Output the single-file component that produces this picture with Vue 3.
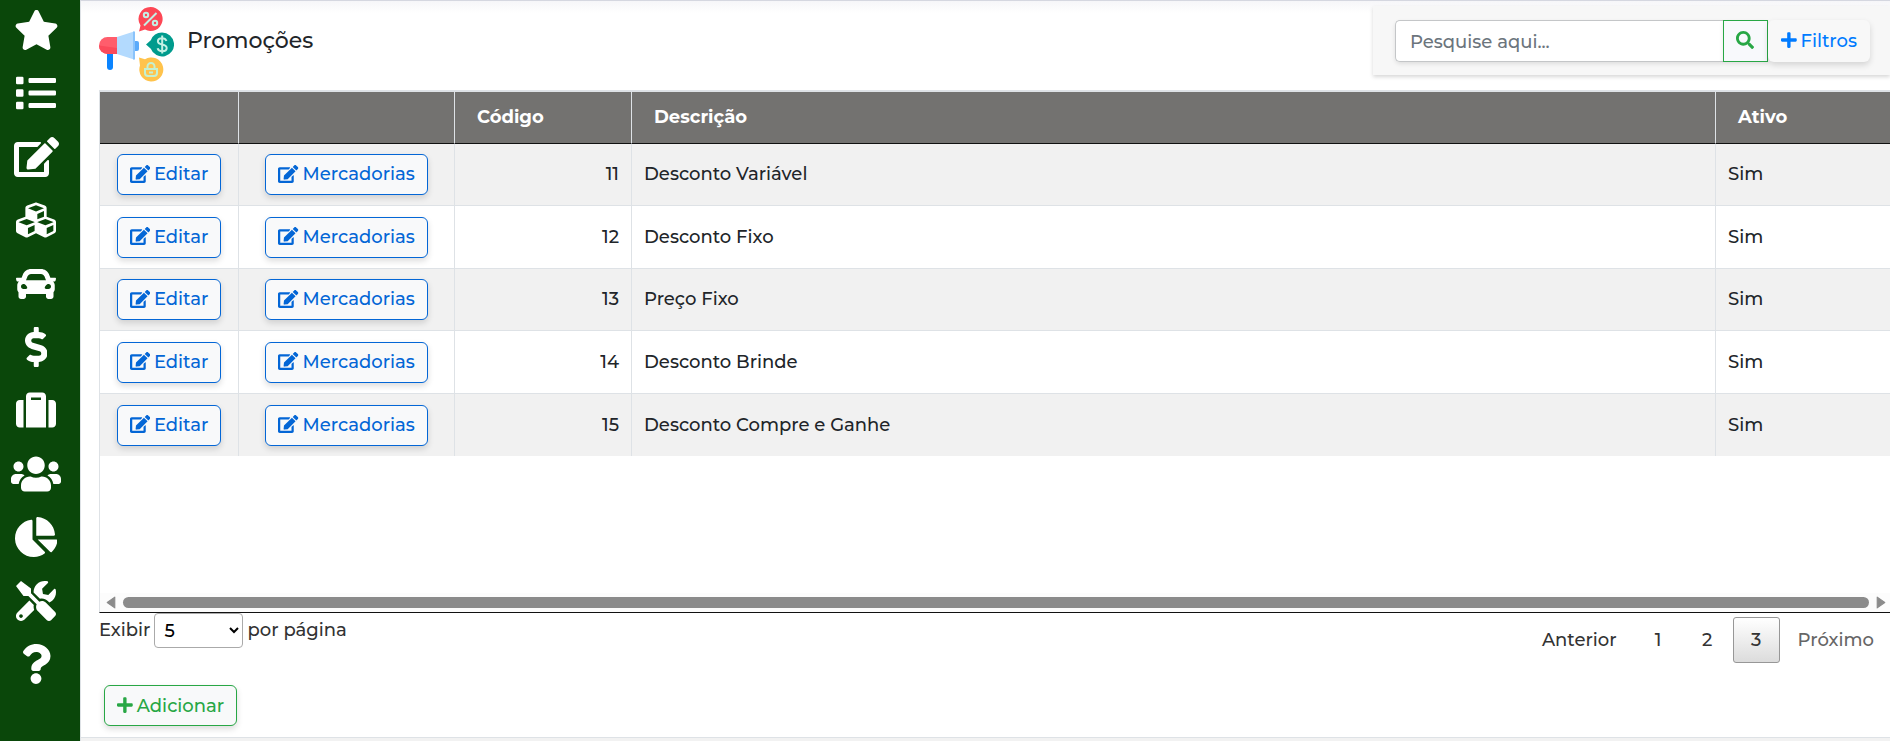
<script setup>
import { ref } from 'vue'

const icons = {
  star: { w: 576, d: 'M259.3 17.8L194 150.2 47.9 171.5c-26.2 3.8-36.7 36.1-17.7 54.6l105.7 103-25 145.5c-4.5 26.3 23.2 46 46.4 33.7L288 439.6l130.7 68.7c23.2 12.2 50.9-7.4 46.4-33.7l-25-145.5 105.7-103c19-18.5 8.5-50.8-17.7-54.6L382 150.2 316.7 17.8c-11.7-23.6-45.6-23.9-57.4 0z' },
  list: { w: 512, d: 'M80 368H16a16 16 0 0 0-16 16v64a16 16 0 0 0 16 16h64a16 16 0 0 0 16-16v-64a16 16 0 0 0-16-16zm0-320H16A16 16 0 0 0 0 64v64a16 16 0 0 0 16 16h64a16 16 0 0 0 16-16V64a16 16 0 0 0-16-16zm0 160H16a16 16 0 0 0-16 16v64a16 16 0 0 0 16 16h64a16 16 0 0 0 16-16v-64a16 16 0 0 0-16-16zm416 176H176a16 16 0 0 0-16 16v32a16 16 0 0 0 16 16h320a16 16 0 0 0 16-16v-32a16 16 0 0 0-16-16zm0-320H176a16 16 0 0 0-16 16v32a16 16 0 0 0 16 16h320a16 16 0 0 0 16-16V80a16 16 0 0 0-16-16zm0 160H176a16 16 0 0 0-16 16v32a16 16 0 0 0 16 16h320a16 16 0 0 0 16-16v-32a16 16 0 0 0-16-16z' },
  edit: { w: 576, d: 'M402.6 83.2l90.2 90.2c3.8 3.8 3.8 10 0 13.8L274.4 405.6l-92.8 10.3c-12.4 1.4-22.9-9.1-21.5-21.5l10.3-92.8L388.8 83.2c3.8-3.8 10-3.8 13.8 0zm162-22.9l-48.8-48.8c-15.2-15.2-39.9-15.2-55.2 0l-35.4 35.4c-3.8 3.8-3.8 10 0 13.8l90.2 90.2c3.8 3.8 10 3.8 13.8 0l35.4-35.4c15.2-15.3 15.2-40 0-55.2zM384 346.2V448H64V128h229.8c3.2 0 6.2-1.3 8.5-3.5l40-40c7.6-7.6 2.2-20.5-8.5-20.5H48C21.5 64 0 85.5 0 112v352c0 26.5 21.5 48 48 48h352c26.5 0 48-21.5 48-48V306.2c0-10.7-12.9-16-20.5-8.5l-40 40c-2.2 2.3-3.5 5.3-3.5 8.5z' },
  cubes: { w: 512, d: 'M488.6 250.2L392 214V105.5c0-15-9.3-28.4-23.4-33.7l-100-37.5c-8.1-3.1-17.1-3.1-25.3 0l-100 37.5c-14.1 5.3-23.4 18.7-23.4 33.7V214l-96.6 36.2C9.3 255.5 0 268.9 0 283.9V394c0 13.6 7.7 26.1 19.9 32.2l100 50c10.1 5.1 22.1 5.1 32.2 0l103.9-52 103.9 52c10.1 5.1 22.1 5.1 32.2 0l100-50c12.2-6.1 19.9-18.6 19.9-32.2V283.9c0-15-9.3-28.4-23.4-33.7zM358 214.8l-85 31.9v-68.2l85-37v73.3zM154 104.1l102-38.2 102 38.2v.6l-102 41.4-102-41.4v-.6zm84 291.1l-85 42.5v-79.1l85-38.8v75.4zm0-112l-102 41.4-102-41.4v-.6l102-38.2 102 38.2v.6zm240 112l-85 42.5v-79.1l85-38.8v75.4zm0-112l-102 41.4-102-41.4v-.6l102-38.2 102 38.2v.6z' },
  car: { w: 512, d: 'M499.99 176h-59.87l-16.64-41.6C406.38 91.63 365.57 64 319.5 64h-127c-46.06 0-86.88 27.63-103.99 70.4L71.87 176H12.01C4.2 176-1.53 183.34.37 190.91l6 24C7.7 220.25 12.5 224 18.01 224h20.07C24.65 235.73 16 252.78 16 272v48c0 16.12 6.16 30.67 16 41.93V416c0 17.67 14.33 32 32 32h32c17.67 0 32-14.33 32-32v-32h256v32c0 17.67 14.33 32 32 32h32c17.67 0 32-14.33 32-32v-54.07c9.84-11.25 16-25.8 16-41.93v-48c0-19.22-8.65-36.27-22.07-48H494c5.51 0 10.31-3.75 11.64-9.09l6-24c1.89-7.57-3.84-14.91-11.65-14.91zm-352.06-17.83c7.29-18.22 24.94-30.17 44.57-30.17h127c19.63 0 37.28 11.95 44.57 30.17L384 208H128l19.93-49.83zM96 319.8c-19.2 0-32-12.76-32-31.9S76.8 256 96 256s48 28.71 48 47.85-28.8 15.95-48 15.95zm320 0c-19.2 0-48 3.19-48-15.95S396.8 256 416 256s32 12.76 32 31.9-12.8 31.9-32 31.9z' },
  dollar: { w: 288, d: 'M209.2 233.4l-108-31.6C88.7 198.2 80 186.5 80 173.5c0-16.3 13.2-29.5 29.5-29.5h66.3c12.2 0 24.2 3.7 34.2 10.5 6.1 4.1 14.3 3.1 19.5-2l34.8-34c7.1-6.9 6.1-18.4-1.8-24.5C238 74.8 207.4 64.1 176 64V16c0-8.8-7.2-16-16-16h-32c-8.8 0-16 7.2-16 16v48h-2.5C45.8 64-5.4 118.7.5 183.6c4.2 46.1 39.4 83.6 83.8 96.6l102.5 30c12.5 3.7 21.2 15.3 21.2 28.3 0 16.3-13.2 29.5-29.5 29.5h-66.3C100 368 88 364.3 78 357.5c-6.1-4.1-14.3-3.1-19.5 2l-34.8 34c-7.1 6.9-6.1 18.4 1.8 24.5 24.5 19.2 55.1 29.9 86.5 30v48c0 8.8 7.2 16 16 16h32c8.8 0 16-7.2 16-16v-48.2c46.6-.9 90.3-28.6 105.7-72.7 21.5-61.6-14.6-124.8-72.5-141.7z' },
  suitcase: { w: 512, d: 'M128 480h256V80c0-26.5-21.5-48-48-48H176c-26.5 0-48 21.5-48 48v400zm64-384h128v32H192V96zm320 80v256c0 26.5-21.5 48-48 48h-48V128h48c26.5 0 48 21.5 48 48zM96 480H48c-26.5 0-48-21.5-48-48V176c0-26.5 21.5-48 48-48h48v352z' },
  users: { w: 640, d: 'M96 224c35.3 0 64-28.7 64-64s-28.7-64-64-64-64 28.7-64 64 28.7 64 64 64zm448 0c35.3 0 64-28.7 64-64s-28.7-64-64-64-64 28.7-64 64 28.7 64 64 64zm32 32h-64c-17.6 0-33.5 7.1-45.1 18.6 40.3 22.1 68.9 62 75.1 109.4h66c17.7 0 32-14.3 32-32v-32c0-35.3-28.7-64-64-64zm-256 0c61.9 0 112-50.1 112-112S381.9 32 320 32 208 82.1 208 144s50.1 112 112 112zm76.8 32h-8.3c-20.8 10-43.9 16-68.5 16s-47.6-6-68.5-16h-8.3C179.6 288 128 339.6 128 403.2V432c0 26.5 21.5 48 48 48h288c26.5 0 48-21.5 48-48v-28.8c0-63.6-51.6-115.2-115.2-115.2zm-223.7-13.4C161.5 263.1 145.6 256 128 256H64c-35.3 0-64 28.7-64 64v32c0 17.7 14.3 32 32 32h65.9c6.3-47.4 34.9-87.3 75.2-109.4z' },
  chart: { w: 544, d: 'M527.79 288H290.5l158.03 158.03c6.04 6.04 15.98 6.53 22.19.68 38.7-36.46 65.32-85.61 73.13-140.86 1.34-9.46-6.51-17.85-16.06-17.85zm-15.83-64.8C503.72 103.74 408.26 8.28 288.8.04 279.68-.59 272 7.1 272 16.24V240h223.77c9.14 0 16.82-7.68 16.19-16.8zM224 288V50.71c0-9.55-8.39-17.4-17.84-16.06C86.99 51.49-4.1 155.6.14 280.37 4.5 408.51 114.83 513.59 243.03 511.98c50.4-.63 96.97-16.87 135.26-44.03 7.9-5.6 8.42-17.23 1.57-24.08L224 288z' },
  tools: { w: 512, d: 'M501.1 395.7L384 278.6c-23.1-23.1-57.6-27.6-85.4-13.9L192 158.1V96L64 0 0 64l96 128h62.1l106.6 106.6c-13.6 27.8-9.2 62.3 13.9 85.4l117.1 117.1c14.6 14.6 38.2 14.6 52.7 0l52.7-52.7c14.5-14.6 14.5-38.2 0-52.7zM331.7 225c28.3 0 54.9 11 74.9 31l19.4 19.4c15.8-6.9 30.8-16.5 43.8-29.5 37.1-37.1 49.7-89.3 37.9-136.7-2.2-9-13.5-12.1-20.1-5.5l-74.4 74.4-67.9-11.3L334 98.9l74.4-74.4c6.6-6.6 3.4-17.9-5.7-20.2-47.4-11.7-99.6.9-136.6 37.9-28.5 28.5-41.9 66.1-41.2 103.6l82.1 82.1c8.1-1.9 16.5-2.9 24.7-2.9zm-103.9 82l-56.7-56.7L18.7 402.8c-25 25-25 65.5 0 90.5s65.5 25 90.5 0l123.6-123.6c-7.6-19.9-9.9-41.6-5-62.7zM64 472c-13.2 0-24-10.8-24-24 0-13.3 10.7-24 24-24s24 10.7 24 24c0 13.2-10.7 24-24 24z' },
  question: { w: 384, d: 'M202.021 0C122.202 0 70.503 32.703 29.914 91.026c-7.363 10.58-5.093 25.086 5.178 32.874l43.138 32.709c10.373 7.865 25.132 6.026 33.253-4.148 25.049-31.381 43.63-49.449 82.757-49.449 30.764 0 68.816 19.799 68.816 49.631 0 22.552-18.617 34.134-48.993 51.164-35.423 19.86-82.299 44.576-82.299 106.405V320c0 13.255 10.745 24 24 24h72.471c13.255 0 24-10.745 24-24v-5.773c0-42.86 125.268-44.645 125.268-160.627C377.504 66.256 286.902 0 202.021 0zM192 373.459c-38.196 0-69.271 31.075-69.271 69.271 0 38.195 31.075 69.27 69.271 69.27s69.271-31.075 69.271-69.271-31.075-69.27-69.271-69.27z' },
  search: { w: 512, d: 'M505 442.7L405.3 343c-4.5-4.5-10.6-7-17-7H372c27.6-35.3 44-79.7 44-128C416 93.1 322.9 0 208 0S0 93.1 0 208s93.1 208 208 208c48.3 0 92.7-16.4 128-44v16.3c0 6.4 2.5 12.5 7 17l99.7 99.7c9.4 9.4 24.6 9.4 33.9 0l28.3-28.3c9.4-9.4 9.4-24.6.1-34zM208 336c-70.7 0-128-57.2-128-128 0-70.7 57.2-128 128-128 70.7 0 128 57.2 128 128 0 70.7-57.2 128-128 128z' },
  plus: { w: 448, d: 'M416 208H272V64c0-17.67-14.33-32-32-32h-32c-17.67 0-32 14.33-32 32v144H32c-17.67 0-32 14.33-32 32v32c0 17.67 14.33 32 32 32h144v144c0 17.67 14.33 32 32 32h32c17.67 0 32-14.33 32-32V304h144c17.67 0 32-14.33 32-32v-32c0-17.67-14.33-32-32-32z' },
}
const box = (name) => `0 0 ${icons[name].w} 512`

const menu = [
  { icon: 'star', label: 'Favoritos' },
  { icon: 'list', label: 'Listas' },
  { icon: 'edit', label: 'Cadastros' },
  { icon: 'cubes', label: 'Estoque' },
  { icon: 'car', label: 'Veículos' },
  { icon: 'dollar', label: 'Financeiro' },
  { icon: 'suitcase', label: 'Negócios' },
  { icon: 'users', label: 'Pessoas' },
  { icon: 'chart', label: 'Relatórios' },
  { icon: 'tools', label: 'Ferramentas' },
  { icon: 'question', label: 'Ajuda' },
]

const rows = [
  { code: 11, name: 'Desconto Variável', active: 'Sim' },
  { code: 12, name: 'Desconto Fixo', active: 'Sim' },
  { code: 13, name: 'Preço Fixo', active: 'Sim' },
  { code: 14, name: 'Desconto Brinde', active: 'Sim' },
  { code: 15, name: 'Desconto Compre e Ganhe', active: 'Sim' },
]

const search = ref('')
const pageSize = ref('5')
const page = ref(3)
</script>

<template>
  <div class="app">
    <nav class="sidebar">
      <a v-for="item in menu" :key="item.icon" href="#" :aria-label="item.label">
        <svg class="icon" :viewBox="box(item.icon)"><path :d="icons[item.icon].d" /></svg>
      </a>
    </nav>

    <main class="main">
      <header class="top">
        <svg class="logo" viewBox="0 0 75 75" aria-hidden="true">
          <path d="M8 44h6v16a3 3 0 0 1-6 0z" fill="#0a84ff" />
          <path d="M35 34h3a2 2 0 0 1 2 2v6a2 2 0 0 1-2 2h-3z" fill="#5aaafa" />
          <path d="M18 30H8.500a8.500 8.500 0 0 0 0 17H18z" fill="#ff5d6c" />
          <path d="M0 38.500a8.500 8.500 0 0 0 8.500 8.500H18v-6z" fill="#fb4a5b" />
          <path d="M18 30l17-5.500v28L18 47z" fill="#b3dafe" />
          <path d="M34 24.500h2v28h-2z" fill="#8ac3fb" />
          <path d="M51.500 0a12 12 0 1 1-5.500 22.600L40 24.500l1.500-6A12 12 0 0 1 51.500 0z" fill="#fd4755" />
          <g fill="none" stroke="#c4f0e4" stroke-width="2">
            <circle cx="47" cy="8" r="2.200" /><circle cx="56" cy="16" r="2.200" /><path d="M57.500 6L45 18.500" />
          </g>
          <path d="M63 25.500a12 12 0 1 1-11.200 16.200L47 37.500l4.800-4.300A12 12 0 0 1 63 25.500z" fill="#009b8d" />
          <path d="M67.500 34c-.8-2-2.300-2.800-4.300-2.800-2.600 0-4.300 1.200-4.300 3 0 4.800 8.800 1.800 8.800 6.800 0 2-1.800 3.200-4.400 3.200-2.300 0-4.100-1-4.700-3M63.200 28.500v18" fill="none" stroke="#c4f0e4" stroke-width="2" />
          <path d="M40 50.500l6 1.800a12 12 0 1 1-5 6.200z" fill="#ffc34c" />
          <path d="M46 62h12v4a3 3 0 0 1-3 3h-6a3 3 0 0 1-3-3zM48.500 62v-2.500a3.500 3.500 0 0 1 7 0V62M50 65.500h4" fill="none" stroke="#c4f0d0" stroke-width="2" />
        </svg>
        <h1>Promoções</h1>
        <form class="filters" @submit.prevent>
          <input v-model="search" type="text" placeholder="Pesquise aqui..." aria-label="Pesquise aqui" />
          <button class="find" type="submit" aria-label="Pesquisar">
            <svg class="icon" :viewBox="box('search')"><path :d="icons.search.d" /></svg>
          </button>
          <button class="btn more" type="button">
            <svg class="icon" :viewBox="box('plus')"><path :d="icons.plus.d" /></svg>Filtros
          </button>
        </form>
      </header>

      <section class="grid">
        <div class="body">
          <table>
            <colgroup>
              <col class="c-edit" /><col class="c-goods" /><col class="c-code" /><col /><col class="c-active" />
            </colgroup>
            <thead>
              <tr><th></th><th></th><th>Código</th><th>Descrição</th><th>Ativo</th></tr>
            </thead>
            <tbody>
              <tr v-for="row in rows" :key="row.code">
                <td class="action">
                  <button class="btn edit" type="button"><svg class="icon" :viewBox="box('edit')"><path :d="icons.edit.d" /></svg>Editar</button>
                </td>
                <td class="action">
                  <button class="btn edit" type="button"><svg class="icon" :viewBox="box('edit')"><path :d="icons.edit.d" /></svg>Mercadorias</button>
                </td>
                <td class="num">{{ row.code }}</td>
                <td>{{ row.name }}</td>
                <td>{{ row.active }}</td>
              </tr>
            </tbody>
          </table>
        </div>
        <div class="scroll">
          <svg viewBox="0 0 9 12"><path d="M8 1v10L1 6z" /></svg>
          <div class="thumb"></div>
          <svg viewBox="0 0 9 12"><path d="M1 1v10l7-5z" /></svg>
        </div>
      </section>

      <div class="footer">
        <label class="length">Exibir
          <select v-model="pageSize"><option>5</option><option>10</option><option>25</option></select>
          por página
        </label>
        <nav class="pages">
          <button type="button">Anterior</button>
          <button v-for="n in 3" :key="n" type="button" :class="{ current: n === page }" @click="page = n">{{ n }}</button>
          <button type="button" disabled>Próximo</button>
        </nav>
      </div>

      <div class="actions">
        <button class="btn add" type="button"><svg class="icon" :viewBox="box('plus')"><path :d="icons.plus.d" /></svg>Adicionar</button>
      </div>
      <div class="strip"></div>
    </main>
  </div>
</template>

<style>
body { background: #fff; }
</style>

<style scoped>
* { box-sizing: border-box; }
.app {
  display: flex;
  min-height: 100vh;
  font-family: Montserrat, Inter, "Open Sans", sans-serif;
  font-size: 18px;
  font-weight: 500;
  line-height: 27px;
  color: #212529;
}
button, input, select { font: inherit; color: inherit; margin: 0; }
button { cursor: pointer; }
.icon { height: 18px; fill: currentColor; display: block; flex: none; }

.sidebar {
  flex: 0 0 80px;
  background: #0a470a;
  color: #fff;
  padding: 10px 8px 57px 0;
  display: flex;
  flex-direction: column;
  align-items: center;
  justify-content: space-between;
}
.sidebar a { color: inherit; }
.sidebar .icon { height: 40px; }

.main {
  flex: 1;
  min-width: 0;
  display: flex;
  flex-direction: column;
  border-left: 1px solid #dee2e6;
  border-top: 1px solid #d5d7e0;
  padding-left: 18px;
  background: linear-gradient(#f6f6f9, #fff 12px);
}
.top { display: flex; align-items: flex-start; height: 89px; padding-top: 5px; }
.logo { width: 75px; height: 75px; margin-top: 1px; }
h1 { margin: 21px 0 0 13px; font-size: 22px; line-height: 28px; font-weight: 500; }
.filters {
  margin-left: auto;
  width: 517px;
  height: 69px;
  padding: 14px 20px 13px 22px;
  background: #f7f7f7;
  box-shadow: 0 2px 4px rgba(0, 0, 0, .16);
  display: flex;
}
.filters input {
  flex: 1;
  min-width: 0;
  border: 1px solid #c4c6c8;
  border-right: 0;
  border-radius: 5px 0 0 5px;
  padding: 2px 14px 0;
  background: #fff;
  outline: 0;
  box-shadow: 0 2px 4px rgba(0, 0, 0, .1);
}
.filters input::placeholder { color: #6c757d; opacity: 1; }
.find {
  width: 45px;
  border: 1px solid #28a745;
  background: #f8f9fc;
  color: #28a745;
  display: grid;
  place-items: center;
  padding: 0 0 2px;
  box-shadow: 0 2px 4px rgba(0, 0, 0, .1);
}
.btn {
  display: inline-flex;
  align-items: center;
  justify-content: center;
  gap: 4px;
  height: 41px;
  padding: 0 12px;
  border: 1px solid;
  border-radius: 6px;
  background: #f8f9fa;
  box-shadow: 0 3px 6px rgba(0, 0, 0, .14);
  white-space: nowrap;
}
.btn .icon { margin-bottom: 2px; }
.more { height: 42px; border-color: transparent; color: #007bff; background: #f8f8f8; }
.edit { color: #0366d6; }
.add { color: #28a745; }

.grid { border-top: 2px solid #dee2e6; border-left: 1px solid #dee2e6; border-bottom: 1px solid #111; flex: 1; display: flex; flex-direction: column; background: #fff; }
.body { flex: 1; overflow: hidden; }
table { width: 100%; table-layout: fixed; border-collapse: separate; border-spacing: 0; }
.c-edit { width: 139px; }
.c-goods { width: 216px; }
.c-code { width: 177px; }
.c-active { width: 174px; }
th {
  height: 52px;
  padding: 0 22px;
  background: #737270;
  color: #fff;
  font-weight: 700;
  text-align: left;
  border-bottom: 1px solid #111;
  border-right: 1px solid #dee2e6;
}
td { height: 62px; padding: 0 12px; border-right: 1px solid #dee2e6; border-bottom: 1px solid #dee2e6; }
th:last-child, td:last-child { border-right: 0; }
tbody tr:nth-child(even) td { height: 63px; }
tbody tr:last-child td { border-bottom: 0; }
tbody tr:nth-child(odd) { background: #f1f1f1; }
.action { text-align: center; }
.action .btn { vertical-align: middle; }
.num { text-align: right; }

.scroll { display: flex; align-items: center; gap: 7px; height: 19px; padding: 0 4px 0 6px; background: #fcfcfc; }
.scroll svg { width: 10px; height: 13px; fill: #8b8b8b; stroke: #8b8b8b; stroke-linejoin: round; }
.thumb { flex: 1; height: 11px; border-radius: 6px; background: #8b8b8b; }

.footer { display: flex; justify-content: space-between; align-items: flex-start; color: #333; }
.length { display: flex; align-items: center; gap: 4px; }
.length select { width: 89px; height: 35px; border: 1px solid #aaa; border-radius: 4px; background: #fff; color: #000; padding: 0 5px; }
.pages { display: flex; gap: 2px; padding-top: 4px; }
.pages button { height: 46px; min-width: 47px; padding: 0 15px; border: 1px solid transparent; border-radius: 3px; background: transparent; color: #333; }
.pages button.current { border-color: #979797; background: linear-gradient(#fff, #dcdcdc); }
.pages button:disabled { color: #666; cursor: default; }

.actions { padding: 22px 5px 11px; line-height: 0; }
.strip { height: 4px; margin-left: -18px; border-top: 1px solid #dee2e6; background: #f2f2f2; }
</style>
